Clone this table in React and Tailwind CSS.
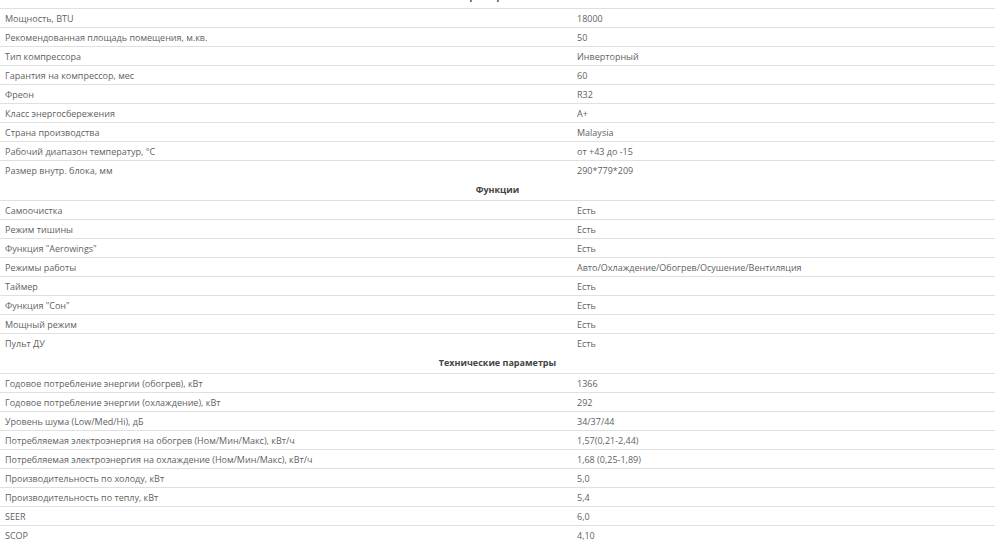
const sections = [
  {
    title: "Характеристики",
    first: true,
    rows: [
      ["Мощность, BTU", "18000"],
      ["Рекомендованная площадь помещения, м.кв.", "50"],
      ["Тип компрессора", "Инверторный"],
      ["Гарантия на компрессор, мес", "60"],
      ["Фреон", "R32"],
      ["Класс энергосбережения", "A+"],
      ["Страна производства", "Malaysia"],
      ["Рабочий диапазон температур, °С", "от +43 до -15"],
      ["Размер внутр. блока, мм", "290*779*209"],
    ],
  },
  {
    title: "Функции",
    rows: [
      ["Самоочистка", "Есть"],
      ["Режим тишины", "Есть"],
      ["Функция \"Aerowings\"", "Есть"],
      ["Режимы работы", "Авто/Охлаждение/Обогрев/Осушение/Вентиляция"],
      ["Таймер", "Есть"],
      ["Функция \"Сон\"", "Есть"],
      ["Мощный режим", "Есть"],
      ["Пульт ДУ", "Есть"],
    ],
  },
  {
    title: "Технические параметры",
    rows: [
      ["Годовое потребление энергии (обогрев), кВт", "1366"],
      ["Годовое потребление энергии (охлаждение), кВт", "292"],
      ["Уровень шума (Low/Med/Hi), дБ", "34/37/44"],
      ["Потребляемая электроэнергия на обогрев (Ном/Мин/Макс), кВт/ч", "1,57(0,21-2,44)"],
      ["Потребляемая электроэнергия на охлаждение (Ном/Мин/Макс), кВт/ч", "1,68 (0,25-1,89)"],
      ["Производительность по холоду, кВт", "5,0"],
      ["Производительность по теплу, кВт", "5,4"],
      ["SEER", "6,0"],
      ["SCOP", "4,10"],
    ],
  },
];

export default function App() {
  return (
    <div
      className="w-[1000px] h-[548px] overflow-hidden bg-white text-[9px] text-[#5f5f5f]"
      style={{ fontFamily: '"Open Sans", "Liberation Sans", sans-serif' }}
    >
      <div className="w-[995px] -mt-[13px]">
        {sections.map((s) => (
          <div key={s.title}>
            <div
              className={
                s.first
                  ? "h-[21px] flex items-center justify-center font-bold text-[#444] pb-[2px]"
                  : "h-[21px] flex items-center justify-center font-bold text-[#444] pt-[1px]"
              }
            >
              {s.title}
            </div>
            {s.rows.map(([k, v]) => (
              <div
                key={k}
                className="grid grid-cols-[572px_1fr] h-[19px] border-t border-[#e0e0e0] items-center leading-[17px]"
              >
                <div className="pl-[5px] whitespace-nowrap">{k}</div>
                <div className="pl-[5px] whitespace-nowrap">{v}</div>
              </div>
            ))}
          </div>
        ))}
      </div>
    </div>
  );
}
